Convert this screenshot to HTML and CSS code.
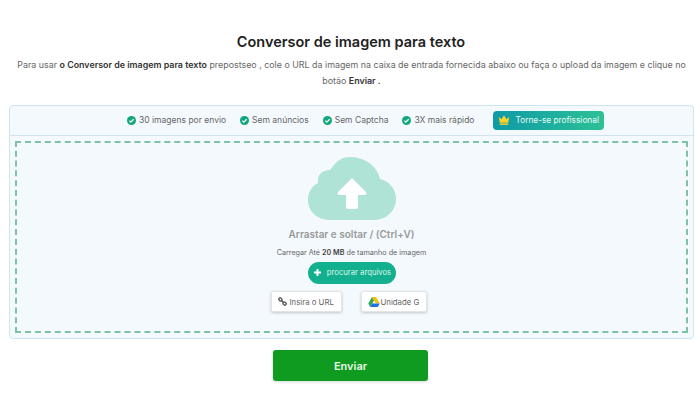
FILE: index.html
```html
<!DOCTYPE html>
<html lang="pt">
<head>
<meta charset="utf-8">
<title>Conversor de imagem para texto</title>
<link rel="stylesheet" href="styles.css">
</head>
<body>
<main class="page">
  <h1 class="title">Conversor de imagem para texto</h1>
  <p class="intro">Para usar <b>o Conversor de imagem para texto</b> prepostseo , cole o URL da imagem na caixa de entrada fornecida abaixo ou faça o upload da imagem e clique no botão <b>Enviar .</b></p>
  <section class="card">
    <div class="features">
      <span class="feature"><svg class="check" viewBox="0 0 16 16"><circle cx="8" cy="8" r="8" fill="#12a67f"/><path d="M4.200 8.200l2.600 2.600 5-5" fill="none" stroke="#fff" stroke-width="2.200"/></svg>30 imagens por envio</span>
      <span class="feature"><svg class="check" viewBox="0 0 16 16"><circle cx="8" cy="8" r="8" fill="#12a67f"/><path d="M4.200 8.200l2.600 2.600 5-5" fill="none" stroke="#fff" stroke-width="2.200"/></svg>Sem anúncios</span>
      <span class="feature"><svg class="check" viewBox="0 0 16 16"><circle cx="8" cy="8" r="8" fill="#12a67f"/><path d="M4.200 8.200l2.600 2.600 5-5" fill="none" stroke="#fff" stroke-width="2.200"/></svg>Sem Captcha</span>
      <span class="feature"><svg class="check" viewBox="0 0 16 16"><circle cx="8" cy="8" r="8" fill="#12a67f"/><path d="M4.200 8.200l2.600 2.600 5-5" fill="none" stroke="#fff" stroke-width="2.200"/></svg>3X mais rápido</span>
      <span class="pro"><svg class="crown" viewBox="0 0 16 13"><path d="M1 2l3.500 3.500L8 0l3.500 5.500L15 2l-1.400 8H2.400z" fill="#f6d32d"/><rect x="2.400" y="11" width="11.200" height="2" fill="#f6d32d"/></svg>Torne-se profissional</span>
    </div>
    <div class="drop">
      <svg class="cloud" viewBox="0 0 88 64"><path d="M22 63C9 63 0 54 0 43c0-8 4-14 10-17-1-8 4-13 12-13C28 5 33 0 41 0c15 0 28 8 31 22 9 2 16 10 16 20 0 12-10 21-22 21z" fill="#afe3d5"/><path d="M44 21l13.500 13.500c1.500 1.500 .7 3.500-1.300 3.500H50v12c0 1.300-.7 2-2 2h-8c-1.300 0-2-.7-2-2V38h-6.200c-2 0-2.800-2-1.300-3.500z" fill="#fff"/></svg>
      <div class="drag">Arrastar e soltar / (Ctrl+V)</div>
      <div class="limit">Carregar Até <b>20 MB</b> de tamanho de imagem</div>
      <button class="browse"><svg class="plus" viewBox="0 0 7 7"><path d="M3.500 0v7M0 3.500h7" fill="none" stroke="#fff" stroke-width="2"/></svg>procurar arquivos</button>
      <div class="sources">
        <button class="source source-url"><svg class="link" viewBox="0 0 12 12"><g fill="none" stroke="#555" stroke-width="1.800"><rect x="1" y="1.500" width="4.500" height="3.500" rx="1.500" transform="rotate(45 3.250 3.250)"/><rect x="6.500" y="7" width="4.500" height="3.500" rx="1.500" transform="rotate(45 8.750 8.750)"/><path d="M4.500 4.500l3 3"/></g></svg>Insira o URL</button>
        <button class="source source-drive"><svg class="drive" viewBox="0 0 16 14"><path d="M5.300 0h5.400L16 9h-5.300z" fill="#fbbc04"/><path d="M5.300 0L0 9l2.700 5L8 5z" fill="#34a853"/><path d="M2.700 14h10.600L16 9H5.400z" fill="#1a73e8"/></svg>Unidade G</button>
      </div>
    </div>
  </section>
  <div class="actions"><button class="submit">Enviar</button></div>
</main>
</body>
</html>
```
FILE: styles.css
```css
* { box-sizing: border-box; }
html, body { margin: 0; height: 100%; background: #fff; }
body { font-family: Inter, "Liberation Sans", sans-serif; overflow: hidden; }
.page { width: 700px; height: 400px; padding: 33px 6px 0 9px; }
.title { margin: 0; text-align: center; font-size: 14.500px; line-height: 18px; font-weight: 600; color: #222; padding-right: 1px; }
.intro { margin: 6px 0 0; padding: 0; text-align: center; font-size: 8.900px; line-height: 15.500px; color: #666; }
.intro b { color: #333; font-weight: 600; }
.card { margin-top: 17px; height: 234px; border: 1px solid #cfe3f2; border-radius: 4px; background: #f4f9fe; padding: 0 5px 5px; display: flex; flex-direction: column; }
.features { height: 30px; flex: none; margin: 0 -5px; padding: 0 0 1px 28px; border-bottom: 1px solid #cfe3f2; display: flex; align-items: center; justify-content: center; gap: 14px; font-size: 8.500px; color: #666; }
.feature { display: flex; align-items: center; gap: 3px; white-space: nowrap; }
.check { width: 9px; height: 9px; }
.pro { display: flex; align-items: center; gap: 5px; height: 19px; margin-left: 5px; padding: 0 5px; border-radius: 4px; background: linear-gradient(90deg, #0e9aa7, #2cc196); color: #e9fbf4; font-size: 8.300px; white-space: nowrap; }
.crown { width: 12px; height: 10px; }
.drop { flex: 1; margin-top: 5px; border: 2px dashed #7cc4a4; display: flex; flex-direction: column; align-items: center; padding-top: 14px; }
.cloud { width: 88px; height: 64px; flex: none; }
.drag { margin-top: 6px; font-size: 10px; line-height: 14px; font-weight: 600; color: #999; }
.limit { margin-top: 6px; font-size: 7.200px; line-height: 11px; color: #666; }
.limit b { color: #444; font-weight: 600; }
.browse { margin-top: 4px; width: 88px; height: 22px; padding: 0 0 1px 2px; border: 0; border-radius: 11px; background: #12b08e; color: #dff5ee; font: 7.700px Inter, sans-serif; display: flex; align-items: center; justify-content: center; gap: 6px; white-space: nowrap; }
.plus { width: 7px; height: 7px; flex: none; }
.sources { margin: 7px 6px 0 0; display: flex; gap: 19px; }
.source { height: 21px; padding: 0; border: 1px solid #e4e4e4; border-radius: 2px; background: #fff; box-shadow: 0 1px 3px rgba(0,0,0,.2); color: #666; font: 7.800px Inter, sans-serif; display: flex; align-items: center; white-space: nowrap; }
.source-url { width: 71px; padding-left: 6px; gap: 3px; }
.source-drive { width: 66px; padding-left: 6px; gap: 1px; }
.link { width: 9px; height: 9px; }
.drive { width: 12px; height: 10px; }
.actions { margin-top: 11px; display: flex; justify-content: center; padding-right: 2px; }
.submit { width: 155px; height: 31px; border: 0; border-radius: 3px; background: #0f9a20; color: #e8f8e8; font: 600 11px Inter, sans-serif; box-shadow: 0 1px 3px rgba(0,0,0,.15); }
```
